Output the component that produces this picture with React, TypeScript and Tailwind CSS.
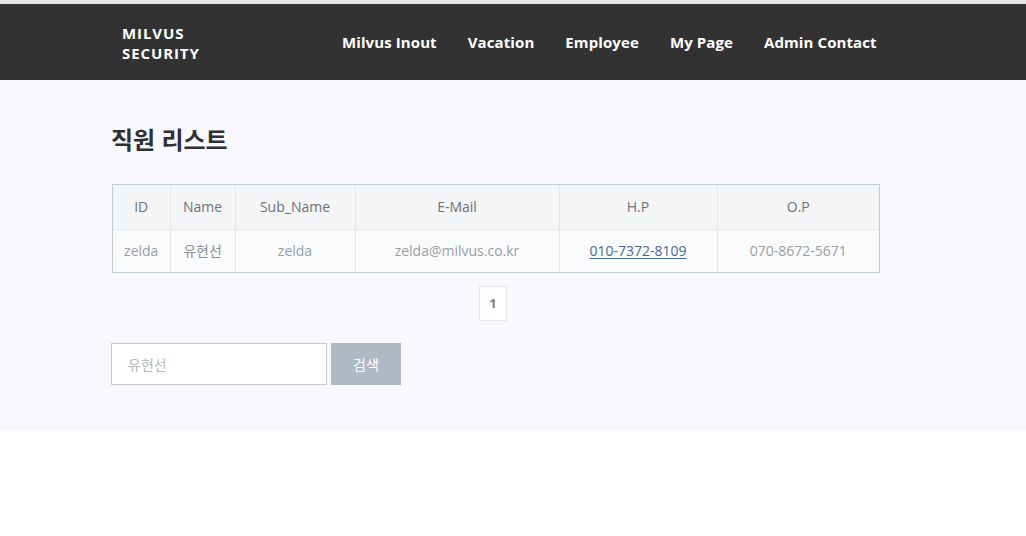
import React from "react";

const font = { fontFamily: '"Open Sans", "Noto Sans CJK KR", sans-serif' };

export default function App() {
  const cols = [
    { h: "ID", w: "w-[57px]" },
    { h: "Name", w: "w-[65px]" },
    { h: "Sub_Name", w: "w-[120px]" },
    { h: "E-Mail", w: "w-[204px]" },
    { h: "H.P", w: "w-[158px]" },
    { h: "O.P", w: "w-[162px]" },
  ];
  const row = ["zelda", "유현선", "zelda", "zelda@milvus.co.kr", "010-7372-8109", "070-8672-5671"];
  return (
    <div className="w-[1026px] h-[536px] bg-white" style={font}>
      <div className="h-[4px] bg-[#e6e6e6]" />
      <header className="h-[76px] bg-[#323232] flex items-center pl-[122px]">
        <div className="text-white font-bold text-[15px] leading-[20px] tracking-[0.9px] w-[170px] pt-[1px]">
          <div>MILVUS</div>
          <div>SECURITY</div>
        </div>
        <nav className="flex items-center gap-[31px] ml-[50px] text-white font-bold text-[15px] tracking-[0.1px]">
          <span>Milvus Inout</span>
          <span>Vacation</span>
          <span>Employee</span>
          <span>My Page</span>
          <span>Admin Contact</span>
        </nav>
      </header>
      <main className="bg-[#f9f9fd] h-[350px] pl-[111px] pt-[43px]">
        <h1 className="text-[24px] font-bold text-[#2f3033] leading-[34px]">직원 리스트</h1>
        <div className="mt-[27px] ml-[1px] w-[768px] border border-[#c3cbd4]">
          <table className="border-collapse text-[14px] text-[#9a9ea3] w-full">
            <thead>
              <tr className="bg-[#f3f5f7] h-[44px]">
                {cols.map((c, i) => (
                  <th
                    key={c.h}
                    className={`${c.w} font-normal text-[#6e7378] border-b border-[#e3e7ea] ${i < 5 ? "border-r" : ""}`}
                  >
                    {c.h}
                  </th>
                ))}
              </tr>
            </thead>
            <tbody>
              <tr className="bg-[#fafbfc] h-[43px]">
                {row.map((v, i) => (
                  <td key={i} className={`text-center border-[#e3e7ea] ${i < 5 ? "border-r" : ""}`}>
                    {i === 4 ? (
                      <span className="text-[#4a6797] underline underline-offset-2">{v}</span>
                    ) : i === 1 ? (
                      <span className="text-[#8d9196]">{v}</span>
                    ) : (
                      v
                    )}
                  </td>
                ))}
              </tr>
            </tbody>
          </table>
        </div>
        <div className="flex justify-center w-[764px] mt-[13px]">
          <div className="w-[28px] h-[35px] border border-[#e3e6ea] bg-white flex items-center justify-center text-[13px] font-bold text-[#7d8288]">
            1
          </div>
        </div>
        <div className="flex mt-[22px] gap-[4px]">
          <input
            className="w-[216px] h-[42px] border border-[#c4c8d0] bg-white px-[16px] text-[14px] outline-none placeholder:text-[#b5b8bd]"
            placeholder="유현선"
            style={font}
          />
          <button className="w-[70px] h-[42px] bg-[#b0b8c4] text-white text-[14px]">검색</button>
        </div>
      </main>
    </div>
  );
}
